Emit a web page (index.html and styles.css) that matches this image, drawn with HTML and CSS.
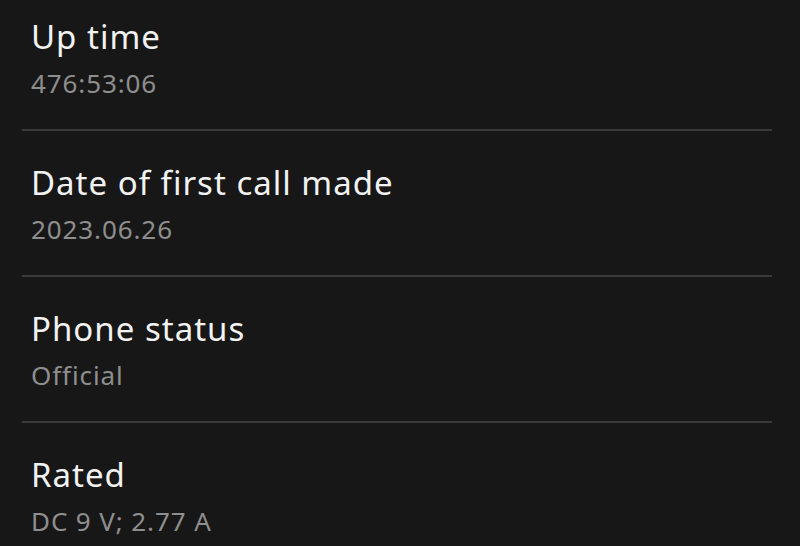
FILE: index.html
```html
<!DOCTYPE html>
<html lang="en">
<head>
  <meta charset="UTF-8" />
  <meta name="viewport" content="width=device-width, initial-scale=1.0"/>
  <title>Phone information</title>
  <link rel="stylesheet" href="styles.css">
</head>
<body>
  <main class="info-list">
    <div class="info-item">
      <div class="info-title">Up time</div>
      <div class="info-value">476:53:06</div>
    </div>
    <div class="info-item">
      <div class="info-title">Date of first call made</div>
      <div class="info-value">2023.06.26</div>
    </div>
    <div class="info-item">
      <div class="info-title">Phone status</div>
      <div class="info-value">Official</div>
    </div>
    <div class="info-item">
      <div class="info-title">Rated</div>
      <div class="info-value">DC 9 V; 2.77 A</div>
    </div>
  </main>
</body>
</html>
```

FILE: styles.css
```css
body {
  margin: 0;
  padding: 0;
  background: #171717;
  font-family: "Noto Sans", "Open Sans", sans-serif;
  overflow: hidden;
}

.info-list {
  margin: -15px 28px 0 22px;
}

.info-item {
  padding: 30px 0 28px 9px;
  border-bottom: 2px solid #3a3a3a;
}

.info-title {
  color: #f2f2f2;
  font-size: 33px;
  line-height: 44px;
  letter-spacing: 1px;
}

.info-value {
  margin-top: 6px;
  color: #8e8e8e;
  font-size: 26px;
  line-height: 36px;
  letter-spacing: 0.9px;
}
```
